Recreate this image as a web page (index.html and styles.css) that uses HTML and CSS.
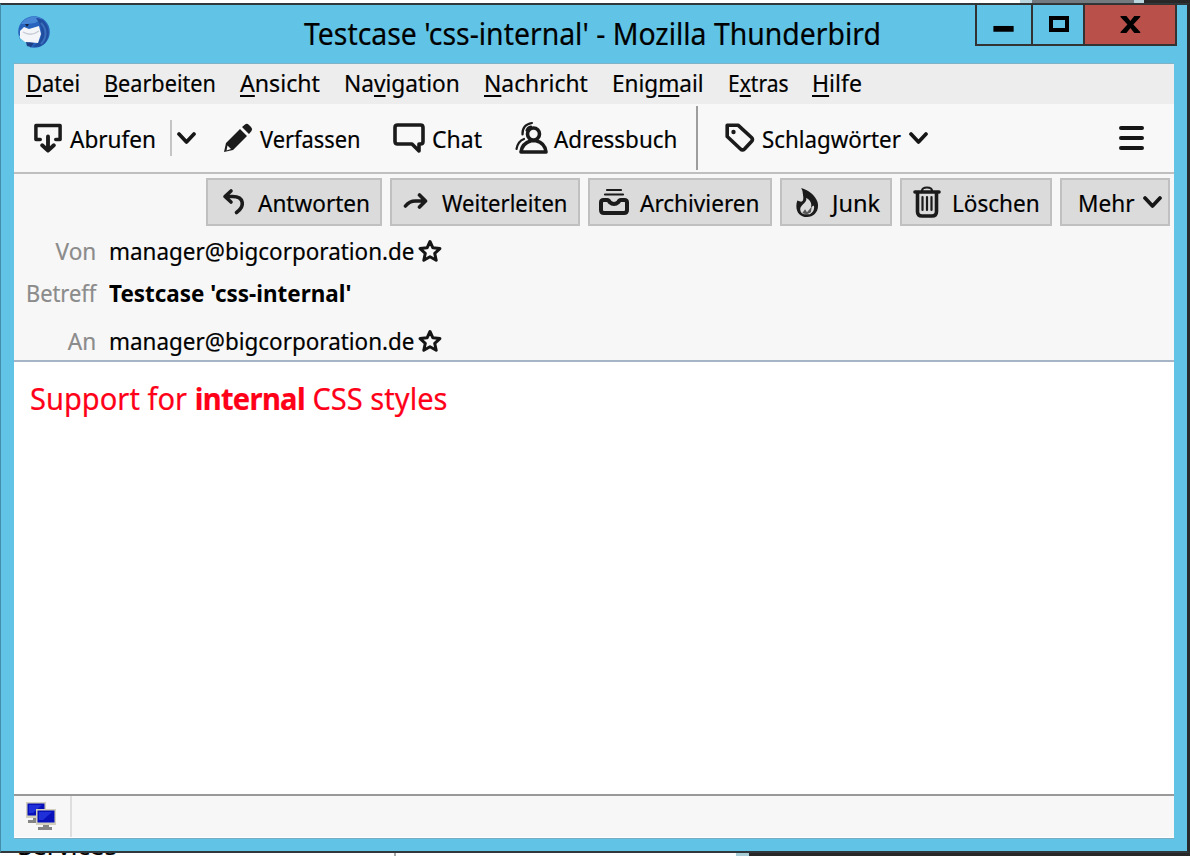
FILE: index.html
```
<!DOCTYPE html>
<html lang="de">
<head>
<meta charset="utf-8">
<title>Testcase 'css-internal' - Mozilla Thunderbird</title>
<link rel="stylesheet" href="styles.css">
</head>
<body>
<div class="desktop">
  <div class="under-top"></div>
  <div class="under-bottom"><span class="under-text">Services</span></div>
  <div class="window">
    <header class="titlebar">
      <svg class="app-icon" viewBox="0 0 34 34">
        <circle cx="17" cy="17" r="15.8" fill="#2864bd"/>
        <path d="M4 9C9 1 19 0 25 4L18 8 10 9Z" fill="#4787d6"/>
        <path d="M19 3C30 3 36 18 28 28C24 32 18 33 16 31C25 27 28 15 19 3Z" fill="#214d9f"/>
        <path d="M24 8C31 15 29 24 24 29" fill="none" stroke="#3a6fbd" stroke-width="2"/>
        <path d="M1 19L5 24 12 27 13 33 5 29Z" fill="#61c3e6"/>
        <path d="M3 16L7 12 12 14 22 11 24 19 21 28 8 27 3 23Z" fill="#f4f5f8"/>
        <path d="M6 17Q14 22 22 16" fill="none" stroke="#c6cbd5" stroke-width="1.4"/>
        <path d="M9 27L17 28 14 32 10 31Z" fill="#1d3f86"/>
        <path d="M8 9L12 9 10 12Z" fill="#172442"/>
      </svg>
      <h1 class="title"><span class="t">Testcase 'css-internal' - Mozilla Thunderbird</span></h1>
      <div class="controls">
        <div class="control min"><svg viewBox="0 0 56 40"><path d="M17 24h21" stroke="#000" stroke-width="6"/></svg></div>
        <div class="control max"><svg viewBox="0 0 50 40"><path d="M18 13h16v12h-16z" fill="none" stroke="#000" stroke-width="4"/></svg></div>
        <div class="control close"><svg viewBox="0 0 91 40"><path d="M36 11h6l4 5 4-5h6v1l-7 7.500 7 7.500v1h-6l-4-5-4 5h-6v-1l7-7.500-7-7.500z"/></svg></div>
      </div>
    </header>
    <main class="client">
      <nav class="menubar">
        <span class="menu m1"><span class="t"><u>D</u>atei</span></span>
        <span class="menu m2"><span class="t"><u>B</u>earbeiten</span></span>
        <span class="menu m3"><span class="t"><u>A</u>nsicht</span></span>
        <span class="menu m4"><span class="t">Na<u>v</u>igation</span></span>
        <span class="menu m5"><span class="t"><u>N</u>achricht</span></span>
        <span class="menu m6"><span class="t">Enig<u>m</u>ail</span></span>
        <span class="menu m7"><span class="t">E<u>x</u>tras</span></span>
        <span class="menu m8"><span class="t"><u>H</u>ilfe</span></span>
      </nav>
      <div class="toolbar">
        <div class="tool get">
          <svg class="i30" viewBox="0 0 30 31"><path d="M7 17H2.500V2.500h25V17H23" class="line"/><path d="M15 14v14M9 23l6 5.500 6-5.500" class="line heavy"/></svg>
          <span class="label"><span class="t">Abrufen</span></span>
          <span class="split"></span>
          <svg class="chev" viewBox="0 0 20 14"><path d="M2 3l7.500 8L17 3"/></svg>
        </div>
        <div class="tool write">
          <svg class="i30" viewBox="0 0 30 30"><path d="M1 29l2-9L17 6l7 7L10 27z M19 4l3-2.500q2-1.500 4 .5l2 2q2 2 .5 4L26 11z"/><path d="M4.500 22.500l3.500 3.500-4.500 1.500z" fill="#f8f8f8"/></svg>
          <span class="label"><span class="t">Verfassen</span></span>
        </div>
        <div class="tool chat">
          <svg class="i32" viewBox="0 0 32 32"><path d="M4.500 3h23q2.500 0 2.500 2.500v14q0 2.500-2.500 2.500H26v7l-7-7H4.500Q2 22 2 19.500v-14Q2 3 4.500 3z" class="line"/></svg>
          <span class="label"><span class="t">Chat</span></span>
        </div>
        <div class="tool book">
          <svg class="i33" viewBox="0 0 33 34"><circle cx="18.500" cy="13" r="6" class="line"/><path d="M6 31q1-8.500 10-11.200h5Q30 22 31 31z" class="line"/><path d="M7.500 13.500Q7 3.500 17 2M11.500 9.500q1-3.500 4.500-4M1.500 28Q3 20 9 18" class="line thin"/></svg>
          <span class="label"><span class="t">Adressbuch</span></span>
        </div>
        <span class="divider"></span>
        <div class="tool tags">
          <svg class="i30" viewBox="0 0 30 30"><path d="M2.200 2.200H13L26.500 14.500q2 2 0 4L19.500 26q-2 2-4 0L2.200 13.500z" class="line"/><circle cx="8.500" cy="9" r="2.200"/></svg>
          <span class="label"><span class="t">Schlagwörter</span></span>
          <svg class="chev" viewBox="0 0 20 14"><path d="M2 3l7.500 8L17 3"/></svg>
        </div>
        <svg class="burger" viewBox="0 0 25 26"><path d="M2 3h21M2 13h21M2 23h21"/></svg>
      </div>
      <section class="msg-header">
        <div class="actions">
          <button class="action reply"><svg viewBox="0 0 24 28"><path d="M9 3L3 8.500l6 5.500M3.500 8.500h7c12 0 12.500 10 4 16" class="line"/></svg><span class="label"><span class="t">Antworten</span></span></button>
          <button class="action forward"><svg viewBox="0 0 26 28"><path d="M2.500 18c3-4 6-5 10-5h9M16.500 7l6 6-6 6" class="line"/></svg><span class="label"><span class="t">Weiterleiten</span></span></button>
          <button class="action archive"><svg viewBox="0 0 30 28"><path d="M4.500 12H8q2 0 2.500 2 4.500 4 9 0 .5-2 2.500-2h3.500q2.500 0 2.500 2.500V22q0 3-3 3H5q-3 0-3-3v-7.500Q2 12 4.500 12z" class="line heavy"/><path d="M8 2h14M6 6.500h18" class="line thin"/></svg><span class="label"><span class="t">Archivieren</span></span></button>
          <button class="action junk"><svg viewBox="0 0 24 32"><path fill-rule="evenodd" d="M6 1c8 2 15 8 17 15 2 9-4 15-11 15C3 31-1 23 2 14l3 1q4 1 3-6Q8 4 6 1z M11 11c2 5-6 7-6 12 0 3 2 5 4 5h6c4-2 5-6 4-9l-3 2q2-6-5-10z"/><path d="M7 27l3-4 2 3 5-6-1 6-4 2z" fill="#555"/></svg><span class="label"><span class="t">Junk</span></span></button>
          <button class="action trash"><svg viewBox="0 0 28 32"><path d="M4.500 7v18.500q0 4.500 4.500 4.500h10q4.500 0 4.500-4.500V7" class="line"/><path d="M2 6h24" class="line"/><path d="M9 5q0-3.500 5-3.500T19 5M9.500 11v13M14 11v13M18.500 11v13" class="line thin"/></svg><span class="label"><span class="t">Löschen</span></span></button>
          <button class="action more"><span class="label"><span class="t">Mehr</span></span><svg class="chev" viewBox="0 0 20 14"><path d="M2 3l7.500 8L17 3"/></svg></button>
        </div>
        <div class="field from"><span class="key"><span class="t">Von</span></span><span class="value"><span class="t">manager@bigcorporation.de</span></span><svg class="star" viewBox="0 0 24 24"><path d="M12 2.500l2.900 6.300 7 .8-5.200 4.700 1.500 7L12 17.800l-6.200 3.500 1.500-7L2.100 9.600l7-.8z"/></svg></div>
        <div class="field subject"><span class="key"><span class="t">Betreff</span></span><span class="value"><span class="t">Testcase 'css-internal'</span></span></div>
        <div class="field to"><span class="key"><span class="t">An</span></span><span class="value"><span class="t">manager@bigcorporation.de</span></span><svg class="star" viewBox="0 0 24 24"><path d="M12 2.500l2.900 6.300 7 .8-5.200 4.700 1.500 7L12 17.800l-6.200 3.500 1.500-7L2.100 9.600l7-.8z"/></svg></div>
      </section>
      <article class="body"><p class="support"><span class="t">Support for <b>internal</b> CSS styles</span></p></article>
      <footer class="status">
        <div class="network"><svg viewBox="0 0 30 29"><g id="pc"><path d="M0 0h20v16H0z" fill="#d2d0bc"/><path d="M1.500 1.500h17v12h-17z" fill="#0710b9"/><path d="M3 3h13l-9 8H3z" fill="#2030d8"/><path d="M7 16h6v2h3v3H2v-3h5z" fill="#858585"/></g><use href="#pc" x="10" y="7"/></svg></div>
      </footer>
    </main>
  </div>
</div>
</body>
</html>
```

FILE: styles.css
```
* { box-sizing: border-box; }
body { margin: 0; overflow: hidden; background: #fff; color: #000; font: 24px/32px "Noto Sans", "Open Sans", sans-serif; -webkit-text-stroke: .2px; }
svg { display: block; flex: none; fill: #1b1b1b; }
.desktop { position: relative; width: 1190px; height: 856px; overflow: hidden; background: #fff; }
.under-top { position: absolute; top: 0; left: 1020px; width: 170px; height: 4px; background: linear-gradient(90deg, #b9d5dd 0 12px, #747b80 12px 114px, #b9d5dd 114px 124px, #282829 124px); }
.under-bottom { position: absolute; left: 0; bottom: 0; width: 1190px; height: 30px; background: linear-gradient(90deg, #fff 0 394px, #aaa 394px 396px, #fff 396px 736px, #a9ced8 736px 749px, #282829 749px); }
.under-text { position: absolute; left: 18px; bottom: -6px; transform: scaleX(1.08); transform-origin: left; }
.window { position: absolute; left: 0; top: 3px; width: 1190px; height: 850px; border-style: solid; border-width: 2px 3px 2px 1px; border-color: #30383c #292a2c #30383c #438fab; background: #61c3e6; padding: 0 13px 13px; }
.t { display: inline-block; white-space: nowrap; transform-origin: left center; transform: scaleX(var(--s, .94)); }
.titlebar { height: 58px; display: flex; align-items: flex-start; margin-right: -3px; }
.app-icon { width: 34px; height: 34px; margin: 10px 0 0 3px; }
.title { margin: 8px 0 0 253px; width: 672px; font-size: 30px; line-height: 42px; font-weight: 400; --s: .946; }
.controls { display: flex; margin-top: -1px; height: 42px; border: solid #333; border-width: 1px 2px 2px; width: 202px; background: #61c3e6; }
.control { flex: none; border-right: 2px solid #333; }
.control svg { height: 40px; width: 100%; fill: #000; }
.min { width: 56px; }
.max { width: 52px; }
.control.close { flex: 1; border: 0; background: #b95049; }
.client { width: 1160px; height: 776px; display: flex; flex-direction: column; background: #f8f8f8; border-top: 1px solid #7fb1c7; border-bottom: 1px solid #78adc3; }
.menubar { height: 40px; flex: none; background: #ededed; display: flex; padding: 3px 0 0 12px; }
.menu { flex: none; }
u { text-decoration: underline; text-decoration-thickness: 2px; text-underline-offset: 3px; text-decoration-skip-ink: none; }
.m1 { width: 78px; --s: .91; } .m2 { width: 136px; --s: .902; } .m3 { width: 104px; --s: .965; } .m4 { width: 140px; --s: .945; }
.m5 { width: 128px; --s: .95; } .m6 { width: 116px; } .m7 { width: 84px; --s: .875; } .m8 { width: 60px; --s: .96; }
.toolbar { height: 70px; flex: none; display: flex; align-items: center; border-bottom: 2px solid #bfbfbf; padding-left: 19px; }
.tool { flex: none; display: flex; align-items: center; height: 36px; }
.label { flex: none; display: block; height: 32px; position: relative; top: 1px; }
.line { fill: none; stroke: #1b1b1b; stroke-width: 3.6; stroke-linejoin: round; stroke-linecap: round; }
.heavy { stroke-width: 4; } .thin { stroke-width: 2.2; }
.i30 { width: 30px; height: 30px; } .i32 { width: 32px; height: 32px; } .i33 { width: 33px; height: 34px; }
.get { width: 190px; } .get .label { width: 100px; padding-left: 7px; }
.split { width: 2px; height: 36px; margin: 0 5px 0 7px; background: #c5c5c5; }
.write { width: 170px; --s: .91; } .write .label { padding-left: 7px; }
.chat { width: 122px; --s: .96; } .chat .label { padding-left: 7px; }
.book { width: 181px; --s: .935; } .book .label { padding-left: 6px; }
.divider { width: 2px; height: 64px; background: #9d9d9d; margin-right: 27px; }
.tags { --s: .93; } .tags .label { padding-left: 7px; width: 154px; }
.chev { width: 20px; height: 14px; fill: none; stroke: #161616; stroke-width: 3.7; stroke-linecap: round; stroke-linejoin: round; }
.burger { width: 25px; height: 26px; margin-left: auto; margin-right: 30px; stroke: #161616; stroke-width: 4; stroke-linecap: round; }
.msg-header { height: 188px; flex: none; background: #f7f7f7; border-bottom: 2px solid #a5b4c7; }
.actions { height: 56px; padding: 4px 5px 0 192px; display: flex; gap: 8px; }
.action { flex: none; height: 48px; display: flex; align-items: center; border: 2px solid #c0c0c0; background: #dbdbdb; padding: 0; color: #000; font: inherit; text-align: left; -webkit-text-stroke: .2px; }
.reply { width: 176px; padding-left: 14px; } .reply svg { width: 24px; height: 28px; margin-right: 12px; }
.forward { width: 190px; padding-left: 11px; --s: .918; } .forward svg { width: 26px; height: 28px; margin-right: 13px; }
.archive { width: 184px; padding-left: 9px; } .archive svg { width: 30px; height: 28px; margin-right: 11px; }
.junk { width: 112px; padding-left: 13px; --s: .98; } .junk svg { width: 24px; height: 31px; margin-right: 13px; }
.trash { width: 152px; padding-left: 11px; } .trash svg { width: 28px; height: 32px; margin-right: 11px; }
.more { width: 110px; padding-left: 16px; } .more .label { width: 65px; }
.field { display: flex; height: 42px; align-items: center; }
.to { margin-top: 6px; }
.key { width: 82px; text-align: right; color: #8b8b8b; flex: none; }
.key .t { transform-origin: right center; }
.subject .key { --s: .91; }
.value { padding-left: 13px; width: 323px; flex: none; --s: .935; }
.star { width: 24px; height: 24px; fill: none; stroke: #151515; stroke-width: 3; stroke-linejoin: round; margin-left: -1px; }
.subject .value { font-weight: 700; --s: .935; -webkit-text-stroke: 0; }
.body { height: 432px; flex: none; background: #fff; padding: 17px 16px; }
.support { margin: 0; font-size: 30px; line-height: 40px; color: #ff0018; --s: .97; }
.support b { letter-spacing: -.7px; }
.status { flex: 1; border-top: 2px solid #999; background: #f7f7f7; display: flex; border-bottom: 1px solid #fff; }
.network { width: 58px; border-right: 2px solid #dedede; padding: 6px 0 0 12px; }
.network svg { width: 30px; height: 29px; }
```
